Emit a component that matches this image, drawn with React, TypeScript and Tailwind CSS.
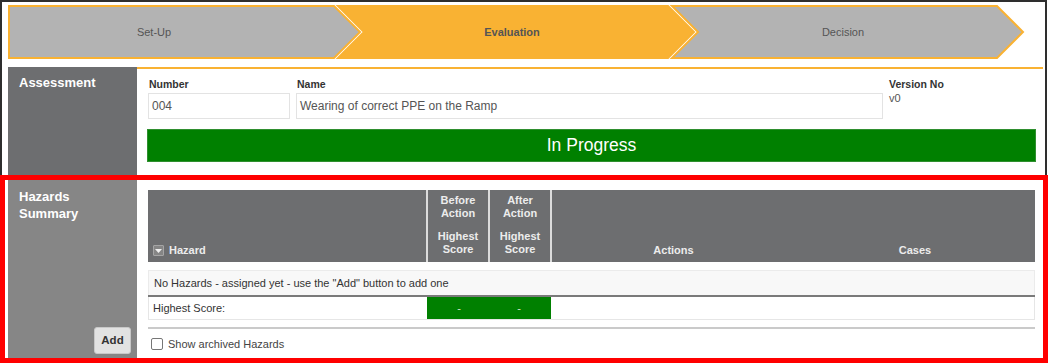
import React from 'react';

const ORANGE = '#f9b233';

const Stepper: React.FC = () => {
    return (
        <div className="relative h-[54px] w-[1035px]">
            <svg className="absolute inset-0" width="1035" height="54" viewBox="0 0 1035 54">
                <polygon points="1,1 326,1 352,27 326,53 1,53" fill="#b3b3b3" stroke={ORANGE} strokeWidth="2" />
                <polygon points="330,1 660,1 686,27 660,53 330,53 356,27" fill={ORANGE} stroke={ORANGE} strokeWidth="2" />
                <polygon points="664,1 989,1 1015,27 989,53 664,53 690,27" fill="#b3b3b3" stroke={ORANGE} strokeWidth="2" />
            </svg>
            <div className="relative flex h-full items-center text-[11px] text-[#555]">
                <span className="w-[292px] text-center">Set-Up</span>
                <span className="w-[424px] text-center font-bold">Evaluation</span>
                <span className="w-[238px] text-center">Decision</span>
            </div>
        </div>
    );
};

const Field: React.FC<{ label: string; value: string; width: string }> = ({ label, value, width }) => (
    <div className={width}>
        <div className="pl-[1px] text-[10.5px] leading-[12px] font-bold text-[#333]">{label}</div>
        <div className="mt-[3px] flex h-[26px] items-center border border-[#e3e3e3] pl-[3px] text-[12px] text-[#555]">
            {value}
        </div>
    </div>
);

const HeaderScore: React.FC<{ top: string }> = ({ top }) => (
    <div className="flex flex-col items-center border-l-2 border-[#dcdcdc] pt-[3.5px] text-[11px] leading-[13.5px] font-bold text-[#ececec]">
        <span>{top}</span>
        <span>Action</span>
        <span className="mt-[9px]">Highest</span>
        <span>Score</span>
    </div>
);

export default function App() {
    return (
        <div className="relative h-[363px] w-[1049px] overflow-hidden bg-white font-['Liberation_Sans',Arial,sans-serif]">
            <div className="h-[363px] w-[1047px] border-t-2 border-r-2 border-l-2 border-[#2e2e2e] pt-[3px] pr-[2px] pl-[6px]">
                <Stepper />

                {/* Assessment */}
                <div className="mt-[8px] flex h-[110px]">
                    <div className="w-[129px] bg-[#6d6e70] pt-[8px] pl-[11px] text-[13px] leading-[16px] font-bold text-white">
                        Assessment
                    </div>
                    <div className="flex-1 border-t-2 border-[#f9b233] pt-[9px] pr-[7px] pl-[11px]">
                        <div className="flex gap-[6px]">
                            <Field label="Number" value="004" width="w-[142px]" />
                            <Field label="Name" value="Wearing of correct PPE on the Ramp" width="w-[587px]" />
                            <div className="flex-1">
                                <div className="text-[10.5px] leading-[12px] font-bold text-[#333]">Version No</div>
                                <div className="mt-[2px] text-[11px] leading-[13px] text-[#555]">v0</div>
                            </div>
                        </div>
                        <div className="mt-[10px] ml-[-1px] flex h-[33px] items-center justify-center border border-[#2f8f2f] bg-[#008000] text-[17.5px] text-white">
                            In Progress
                        </div>
                    </div>
                </div>

                {/* Hazards Summary */}
                <div className="flex h-[186px]">
                    <div className="flex w-[129px] flex-col justify-between bg-[#868686] pt-[11px] pr-[6px] pb-[9px] pl-[11px]">
                        <div className="text-[13px] leading-[17px] font-bold text-white">
                            Hazards
                            <br />
                            Summary
                        </div>
                        <button className="flex h-[27px] w-[37px] items-center justify-center self-end rounded-[3px] border border-[#c8c8c8] bg-[#e2e2e2] text-[11.5px] font-bold text-[#333]">
                            Add
                        </button>
                    </div>
                    <div className="flex-1 pt-[13px] pr-[8px] pl-[11px]">
                        <div className="grid h-[72px] grid-cols-[278px_62px_62px_245px_1fr] bg-[#6d6e70]">
                            <div className="flex items-end gap-[5px] pb-[5px] pl-[5px] text-[11px] leading-[13px] font-bold text-[#ececec]">
                                <span className="mb-[1px] flex h-[11px] w-[11px] items-center justify-center rounded-[1px] border border-[#a5a5a5] bg-[#858585]">
                                    <svg width="7" height="4" viewBox="0 0 7 4">
                                        <polygon points="0,0 7,0 3.5,4" fill="#f0f0f0" />
                                    </svg>
                                </span>
                                <span>Hazard</span>
                            </div>
                            <HeaderScore top="Before" />
                            <HeaderScore top="After" />
                            <div className="flex items-end justify-center border-l-2 border-[#dcdcdc] pb-[5px] text-[11px] leading-[13px] font-bold text-[#ececec]">
                                Actions
                            </div>
                            <div className="flex items-end justify-center pb-[5px] text-[11px] leading-[13px] font-bold text-[#ececec]">
                                Cases
                            </div>
                        </div>

                        <div className="mt-[8px] flex h-[25px] items-center border-t border-r border-l border-[#ebebeb] bg-[#f8f8f8] pl-[5px] text-[11px] text-[#333]">
                            No Hazards - assigned yet - use the "Add" button to add one
                        </div>
                        <div className="h-[2px] bg-[#7a7a7a]" />
                        <div className="grid h-[23px] grid-cols-[278px_62px_62px_245px_1fr] border-r border-b border-l border-[#e6e6e6] text-[11px] text-[#333]">
                            <div className="flex items-center pl-[4px]">Highest Score:</div>
                            <div className="flex items-center justify-center bg-[#008000] pl-[2px] text-[#cfe3c4]">-</div>
                            <div className="flex items-center justify-center bg-[#008000] pr-[2px] text-[#cfe3c4]">-</div>
                            <div />
                            <div />
                        </div>

                        <div className="mt-[7px] h-[2px] bg-[#cacaca]" />
                        <div className="mt-[9px] flex items-center gap-[5px] pl-[3px]">
                            <span className="h-[12px] w-[12px] rounded-[2px] border border-[#767676] bg-white" />
                            <span className="text-[11px] leading-[12px] text-[#444]">Show archived Hazards</span>
                        </div>
                    </div>
                </div>
            </div>

            {/* highlight box */}
            <div className="absolute top-[175px] left-0 h-[188px] w-[1048px] border-[5px] border-[#ff0000]" />
        </div>
    );
}
